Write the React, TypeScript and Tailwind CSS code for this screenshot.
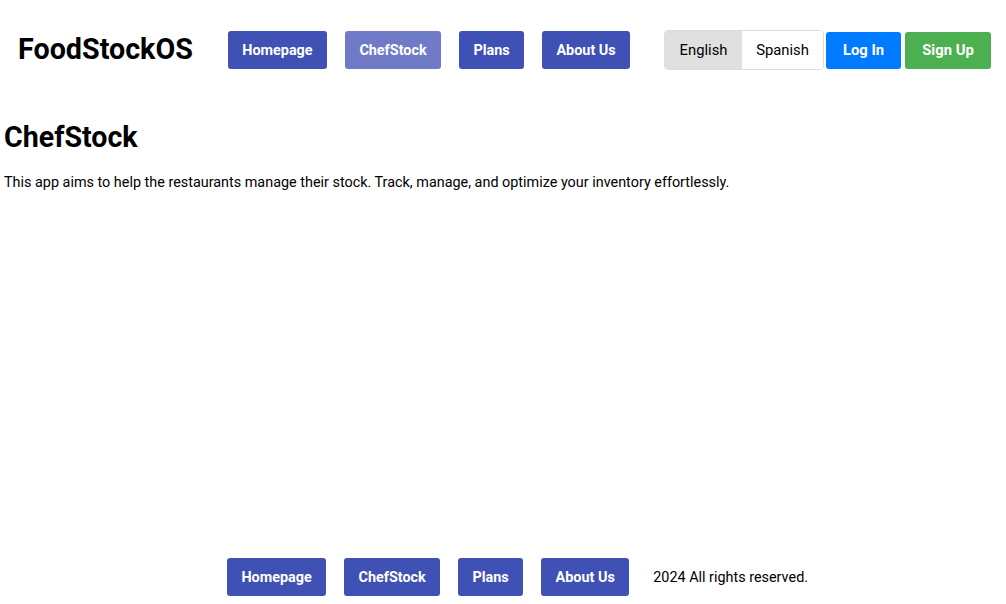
import { useState } from 'react';

const navItems = ['Homepage', 'ChefStock', 'Plans', 'About Us'];

function NavButton({ label, active }: { label: string; active?: boolean }) {
  return (
    <button
      className={`h-[38px] px-[14.4px] pt-[1px] rounded-[3px] text-[14.4px] font-bold text-white ${
        active ? 'bg-[#6f7bc6]' : 'bg-[#3f51b5]'
      }`}
    >
      {label}
    </button>
  );
}

export default function App() {
  const [lang, setLang] = useState<'en' | 'es'>('en');

  return (
    <div className="min-h-screen flex flex-col bg-white text-black font-['Roboto',sans-serif]">
      {/* Header */}
      <header className="flex items-center h-[100px] pl-[18px] pr-[15px]">
        <div className="text-[28.7px] font-bold">FoodStockOS</div>
        <nav className="flex items-center gap-[18px] ml-[35px]">
          {navItems.map((item) => (
            <NavButton key={item} label={item} active={item === 'ChefStock'} />
          ))}
        </nav>
        <div className="flex items-center ml-auto">
          <div className="flex h-[40px] rounded-[4px] border border-[#dddddd] overflow-hidden">
            <button
              onClick={() => setLang('en')}
              className={`w-[77px] text-[14.8px] ${lang === 'en' ? 'bg-[#e0e0e0]' : 'bg-white'}`}
            >
              English
            </button>
            <button
              onClick={() => setLang('es')}
              className={`w-[81px] text-[14.8px] ${lang === 'es' ? 'bg-[#e0e0e0]' : 'bg-white'}`}
            >
              Spanish
            </button>
          </div>
          <button className="ml-[2px] h-[37px] w-[75px] rounded-[3px] bg-[#007bff] text-white text-[14.8px] font-bold">
            Log In
          </button>
          <button className="ml-[4px] h-[37px] w-[86px] rounded-[3px] bg-[#4caf50] text-white text-[14.8px] font-bold">
            Sign Up
          </button>
        </div>
      </header>

      {/* Content */}
      <main className="flex-1 px-[4px] pt-[18px]">
        <h1 className="text-[28.6px] font-bold leading-[38px]">ChefStock</h1>
        <p className="mt-[18px] text-[14.4px] leading-[18px]">
          This app aims to help the restaurants manage their stock. Track, manage, and optimize your inventory effortlessly.
        </p>
      </main>

      {/* Footer */}
      <footer className="flex items-center pl-[227px] gap-[18px] pb-[8px]">
        {navItems.map((item) => (
          <NavButton key={item} label={item} />
        ))}
        <span className="ml-[6px] pt-[1px] text-[14.4px]">2024 All rights reserved.</span>
      </footer>
    </div>
  );
}
